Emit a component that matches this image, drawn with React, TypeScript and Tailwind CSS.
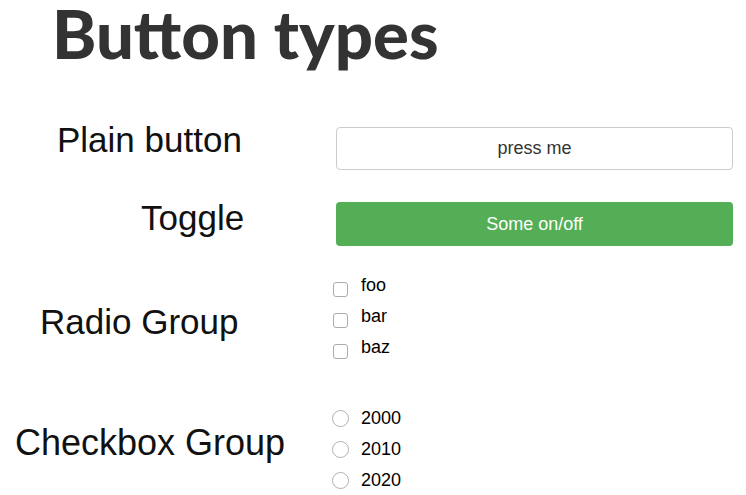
import { useState } from "react";

const groupOptions = ["foo", "bar", "baz"];
const years = ["2000", "2010", "2020"];

const labelCls =
  "leading-[40px] text-[#111] font-['Liberation_Sans',Arial,sans-serif]";

const App = () => {
  const [on, setOn] = useState(true);
  const [checked, setChecked] = useState<string[]>([]);
  const [year, setYear] = useState<string | null>(null);

  const toggleItem = (item: string) => {
    setChecked((prev) =>
      prev.includes(item) ? prev.filter((p) => p !== item) : [...prev, item]
    );
  };

  return (
    <div className="w-[746px] h-[495px] bg-white font-['Liberation_Sans',Arial,sans-serif]">
      <h1 className="h-[66px] pl-[52px] text-[67px] leading-[66px] font-black text-[#333] font-['Lato',sans-serif]">
        Button types
      </h1>

      <div className="flex items-start mt-[54px]">
        <div className={`w-[336px] shrink-0 pl-[57px] text-[35px] ${labelCls}`}>
          Plain button
        </div>
        <button className="mt-[7px] w-[397px] h-[43px] bg-white border border-[#cccccc] rounded-[4px] text-[18px] text-[#333]">
          press me
        </button>
      </div>

      <div className="flex items-start mt-[28px]">
        <div className={`w-[336px] shrink-0 pl-[141px] text-[35px] ${labelCls}`}>
          Toggle
        </div>
        <button
          onClick={() => setOn(!on)}
          className={`mt-[4px] w-[397px] h-[44px] rounded-[4px] text-[18px] ${
            on ? "bg-[#53ae55] text-white" : "bg-white text-[#333] border border-[#cccccc]"
          }`}
        >
          Some on/off
        </button>
      </div>

      <div className="flex items-start mt-[28px]">
        <div className={`w-[333px] shrink-0 pl-[40px] mt-[28px] text-[35px] ${labelCls}`}>
          Radio Group
        </div>
        <div className="flex flex-col">
          {groupOptions.map((opt) => (
            <label key={opt} className="flex items-start h-[31px] cursor-pointer">
              <input
                type="checkbox"
                checked={checked.includes(opt)}
                onChange={() => toggleItem(opt)}
                className="appearance-none mt-[8px] w-[15px] h-[15px] border border-[#ababab] rounded-[3px] bg-white checked:bg-[#3b82f6]"
              />
              <span className="ml-[13px] mt-[1px] text-[18px] leading-[21px] text-black">
                {opt}
              </span>
            </label>
          ))}
        </div>
      </div>

      <div className="flex items-start mt-[35px]">
        <div className={`w-[332px] shrink-0 pl-[15px] mt-[21px] text-[36px] ${labelCls}`}>
          Checkbox Group
        </div>
        <div className="flex flex-col">
          {years.map((y) => (
            <label key={y} className="flex items-start h-[31px] cursor-pointer">
              <input
                type="radio"
                name="year"
                checked={year === y}
                onChange={() => setYear(y)}
                className="appearance-none mt-[8px] w-[17px] h-[17px] border border-[#b0b0b0] rounded-full bg-white checked:border-[5px] checked:border-[#3b82f6]"
              />
              <span className="ml-[12px] mt-[6px] text-[18px] leading-[21px] text-black">
                {y}
              </span>
            </label>
          ))}
        </div>
      </div>
    </div>
  );
};

export default App;
